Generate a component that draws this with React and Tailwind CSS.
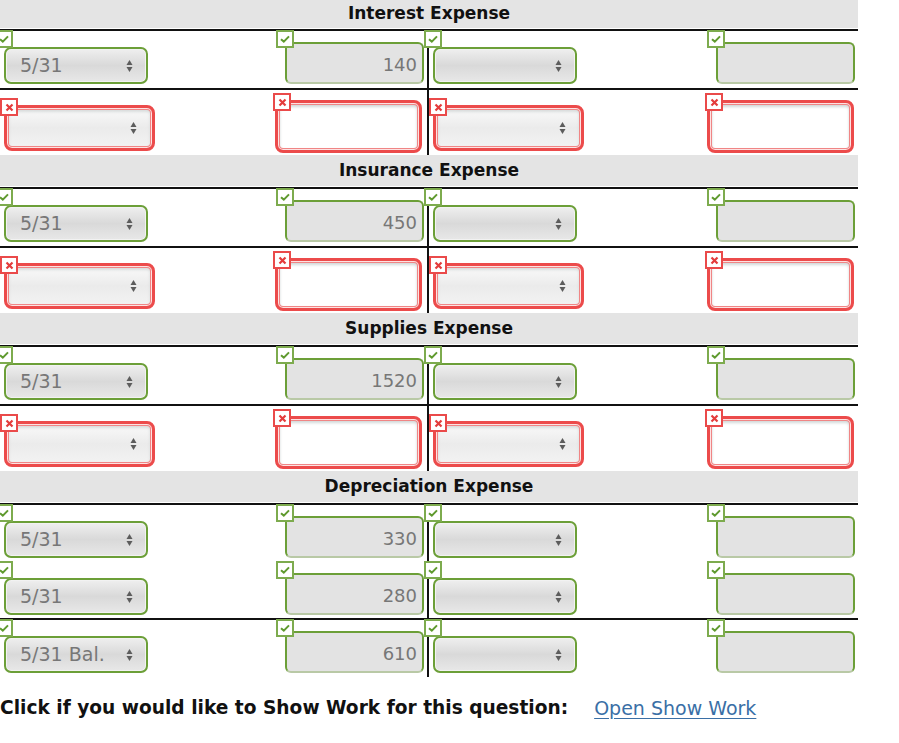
const FONT = "font-['DejaVu_Sans','Liberation_Sans',sans-serif]";

function Badge({ ok, pos }) {
  if (ok) {
    return (
      <span className={`absolute z-10 flex h-[18px] w-[18px] items-center justify-center border-2 border-[#7dab4e] bg-white ${pos}`}>
        <svg width="10" height="8" viewBox="0 0 10 8">
          <path d="M1 4.2 L3.8 6.6 L9 1.4" stroke="#5f9a2e" strokeWidth="2" fill="none" />
        </svg>
      </span>
    );
  }
  return (
    <span className={`absolute z-10 flex h-[18px] w-[18px] items-center justify-center border-2 border-[#ea4a4a] bg-white ${pos}`}>
      <svg width="9" height="9" viewBox="0 0 9 9">
        <path d="M1.5 1.5 L7.5 7.5 M7.5 1.5 L1.5 7.5" stroke="#e43c3c" strokeWidth="2.2" fill="none" />
      </svg>
    </span>
  );
}

function Arrows() {
  return (
    <svg width="7" height="14" viewBox="0 0 7 14" className="shrink-0">
      <path d="M0.5 6 L3.5 1 L6.5 6 Z" fill="#5c5c5c" />
      <path d="M0.5 8 L3.5 13 L6.5 8 Z" fill="#5c5c5c" />
    </svg>
  );
}

function GreenSelect({ value }) {
  return (
    <div className="relative ml-[4px] mt-[16px] flex h-[37px] w-[144px] items-center rounded-[7px] border-2 border-[#6c9f38] bg-linear-to-b from-[#efefef] via-[#d9d9d9] to-[#e8e8e8] pl-[14px] pr-[13px] text-[19px] text-[#777] shadow-[inset_0_0_0_1px_#f2f2f2]">
      <span className="flex-1 whitespace-nowrap">{value}</span>
      <Arrows />
      <Badge ok pos="-left-[11px] -top-[19px]" />
    </div>
  );
}

function GreenInput({ value, right }) {
  return (
    <div className={`relative mt-[11px] flex h-[42px] w-[139px] items-center justify-end rounded-[6px] border-2 border-[#6c9f38] border-b-[#b9c9a6] bg-[#e3e3e3] pr-[5px] pt-[3px] text-[18px] text-[#777] ${right ? 'ml-[139px]' : 'ml-[137px]'}`}>
      {value}
      <Badge ok pos="-left-[11px] -top-[14px]" />
    </div>
  );
}

function RedSelect() {
  return (
    <div className="relative ml-[4px] mt-[15px] flex h-[46px] w-[151px] items-center justify-end rounded-[8px] border-[3px] border-[#ec4b4b] bg-linear-to-b from-[#fafafa] via-[#ebebeb] to-[#f3f3f3] pr-[15px] shadow-[inset_0_0_0_1px_#fde2e2,inset_0_0_0_2px_#f08585,inset_0_2px_3px_2px_#d8dcdc]">
      <Arrows />
      <Badge pos="-left-[7px] -top-[10px]" />
    </div>
  );
}

function RedInput({ right }) {
  return (
    <div className={`relative mt-[10px] h-[53px] w-[147px] rounded-[8px] border-[3px] border-[#ec4b4b] bg-white shadow-[inset_0_0_0_1px_#fde2e2,inset_0_0_0_2px_#f08585,inset_0_2px_3px_2px_#d2d8d8] ${right ? 'ml-[123px]' : 'ml-[120px]'}`}>
      <Badge pos="-left-[5px] -top-[10px]" />
    </div>
  );
}

function VLine() {
  return <div className="w-[2px] shrink-0 self-stretch bg-[#111]" />;
}

function HLine() {
  return <div className="h-[2px] w-full bg-[#111]" />;
}

function GreenRow({ date, amount, h = 'h-[57px]' }) {
  return (
    <div className={`flex ${h}`}>
      <div className="flex w-[427px] shrink-0 items-start">
        <GreenSelect value={date} />
        <GreenInput value={amount} />
      </div>
      <VLine />
      <div className="flex flex-1 items-start">
        <GreenSelect value="" />
        <GreenInput value="" right />
      </div>
    </div>
  );
}

function RedRow() {
  return (
    <div className="flex h-[65px]">
      <div className="flex w-[427px] shrink-0 items-start">
        <RedSelect />
        <RedInput />
      </div>
      <VLine />
      <div className="flex flex-1 items-start">
        <RedSelect />
        <RedInput right />
      </div>
    </div>
  );
}

function Header({ title, first }) {
  return (
    <div className="border-b border-white">
      <div className={`flex items-center justify-center bg-[#e4e4e4] text-[17px] font-bold text-[#111] ${first ? 'h-[28px]' : 'h-[31px]'}`}>
        {title}
      </div>
    </div>
  );
}

function Section({ title, date, amount, first }) {
  return (
    <>
      <Header title={title} first={first} />
      <HLine />
      <GreenRow date={date} amount={amount} />
      <HLine />
      <RedRow />
    </>
  );
}

export default function App() {
  return (
    <div className={`relative h-[743px] w-[899px] overflow-hidden bg-white ${FONT}`}>
      <div className="w-[858px]">
        <Section title="Interest Expense" date="5/31" amount="140" first />
        <Section title="Insurance Expense" date="5/31" amount="450" />
        <Section title="Supplies Expense" date="5/31" amount="1520" />
        <Header title="Depreciation Expense" />
        <HLine />
        <GreenRow date="5/31" amount="330" />
        <GreenRow date="5/31" amount="280" h="h-[56px]" />
        <HLine />
        <GreenRow date="5/31 Bal." amount="610" />
      </div>
      <div className="mt-[17px] flex items-center whitespace-nowrap">
        <span className="text-[18.6px] font-bold text-[#111]">Click if you would like to Show Work for this question:</span>
        <a href="#" className="ml-[26px] text-[19px] text-[#3a6fa6] underline underline-offset-[3px]">Open Show Work</a>
      </div>
    </div>
  );
}
